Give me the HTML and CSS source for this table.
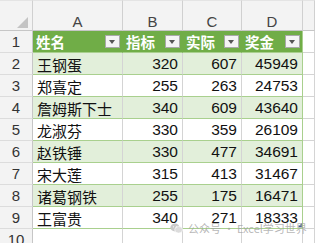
FILE: index.html
```html
<!DOCTYPE html>
<html lang="zh">
<head>
<meta charset="utf-8">
<link rel="stylesheet" href="styles.css">
</head>
<body>
<div class="sheet">
  <div class="grid">
    <div class="ch corner"><svg class="tri" width="11" height="11" viewBox="0 0 11 11"><polygon points="11,0 11,11 0,11" fill="#c4c4c4"/></svg></div>
    <div class="ch">A</div>
    <div class="ch">B</div>
    <div class="ch">C</div>
    <div class="ch">D</div>
    <div class="ch last"></div>

    <div class="rh">1</div>
    <div class="th">姓名<span class="fb"></span></div>
    <div class="th">指标<span class="fb"></span></div>
    <div class="th">实际<span class="fb"></span></div>
    <div class="th te">奖金<span class="fb"></span></div>
    <div class="gc"></div>

    <div class="rh">2</div>
    <div class="td band">王钢蛋</div>
    <div class="td band num">320</div>
    <div class="td band num">607</div>
    <div class="td band num te">45949</div>
    <div class="gc"></div>

    <div class="rh">3</div>
    <div class="td">郑喜定</div>
    <div class="td num">255</div>
    <div class="td num">263</div>
    <div class="td num te">24753</div>
    <div class="gc"></div>

    <div class="rh">4</div>
    <div class="td band">詹姆斯下士</div>
    <div class="td band num">340</div>
    <div class="td band num">609</div>
    <div class="td band num te">43640</div>
    <div class="gc"></div>

    <div class="rh">5</div>
    <div class="td">龙淑芬</div>
    <div class="td num">330</div>
    <div class="td num">359</div>
    <div class="td num te">26109</div>
    <div class="gc"></div>

    <div class="rh">6</div>
    <div class="td band">赵铁锤</div>
    <div class="td band num">330</div>
    <div class="td band num">477</div>
    <div class="td band num te">34691</div>
    <div class="gc"></div>

    <div class="rh">7</div>
    <div class="td">宋大莲</div>
    <div class="td num">315</div>
    <div class="td num">413</div>
    <div class="td num te">31467</div>
    <div class="gc"></div>

    <div class="rh">8</div>
    <div class="td band">诸葛钢铁</div>
    <div class="td band num">255</div>
    <div class="td band num">175</div>
    <div class="td band num te">16471</div>
    <div class="gc"></div>

    <div class="rh">9</div>
    <div class="td">王富贵</div>
    <div class="td num">340</div>
    <div class="td num">271</div>
    <div class="td num te">18333</div>
    <div class="gc"></div>

    <div class="rh">10</div>
    <div class="gc"></div>
    <div class="gc"></div>
    <div class="gc"></div>
    <div class="gc"></div>
    <div class="gc"></div>
  </div>
  <span class="handle"></span>
  <div class="wm">
    <svg class="wmi" width="13" height="11" viewBox="0 0 13 11"><ellipse cx="5" cy="4.5" rx="4.6" ry="3.9" fill="#c9c9c9"/><ellipse cx="8.6" cy="6.8" rx="3.9" ry="3.3" fill="#dcdcdc" stroke="#fff" stroke-width="0.6"/><circle cx="3.4" cy="3.8" r="0.6" fill="#fff"/><circle cx="6.4" cy="3.8" r="0.6" fill="#fff"/></svg>
    <span>公众号 · Excel学习世界</span>
  </div>
</div>
</body>
</html>
```

FILE: styles.css
```css
html, body {
  margin: 0;
  padding: 0;
  background: #ffffff;
}
body {
  width: 315px;
  height: 243px;
  overflow: hidden;
  font-family: "Liberation Sans", "Noto Sans CJK SC", sans-serif;
  font-size: 15px;
  color: #111;
}
.sheet {
  position: relative;
  width: 315px;
  height: 243px;
  overflow: hidden;
}
.grid {
  display: grid;
  grid-template-columns: 33px 90px 60px 59px 61px 1fr;
  grid-template-rows: 31px repeat(10, 22px);
}
.grid > div {
  box-sizing: border-box;
  border-right: 1px solid #d4d4d4;
  border-bottom: 1px solid #d4d4d4;
  white-space: nowrap;
  overflow: hidden;
}
.ch {
  background: #f3f3f3;
  color: #444;
  display: flex;
  justify-content: center;
  align-items: center;
  padding-top: 11px;
  font-size: 15px;
  border-top: 1px solid #e4e4e4;
}
.grid > .ch {
  border-right-color: #d0d0d0;
  border-bottom-color: #c6c6c6;
}
.corner {
  position: relative;
  padding-top: 0;
}
.tri {
  position: absolute;
  left: 17px;
  top: 16px;
}
.grid > .rh {
  background: #f3f3f3;
  color: #333;
  display: flex;
  justify-content: center;
  align-items: center;
  border-right-color: #c6c6c6;
  border-bottom-color: #dcdcdc;
  font-size: 15px;
}
.grid > .th {
  background: #70ad47;
  color: #fff;
  font-weight: bold;
  display: flex;
  align-items: center;
  padding-left: 3px;
  padding-right: 2px;
  font-family: "Noto Sans CJK SC", sans-serif;
  font-size: 14.5px;
  border-right-color: #70ad47;
  border-bottom-color: #a9d08e;
}
.fb {
  margin-left: auto;
  width: 15px;
  height: 13px;
  box-sizing: border-box;
  background: #f4f4f4;
  border: 1px solid #a9a9a9;
  position: relative;
}
.fb::after {
  content: "";
  position: absolute;
  left: 3px;
  top: 4px;
  border-left: 3.5px solid transparent;
  border-right: 3.5px solid transparent;
  border-top: 4px solid #555;
}
.grid > .td {
  display: flex;
  align-items: center;
  padding: 1px 4px 0 4px;
  border-bottom-color: #a9d08e;
  font-family: "Noto Sans CJK SC", sans-serif;
}
.grid > .band {
  background: #e2efda;
}
.grid > .num {
  justify-content: flex-end;
  font-family: "Liberation Sans", sans-serif;
  font-size: 15.5px;
  padding-right: 4px;
}
.grid > .te {
  border-right-color: #a9d08e;
}
.handle {
  position: absolute;
  left: 298px;
  top: 223px;
  width: 0;
  height: 0;
  border-left: 4px solid transparent;
  border-bottom: 4px solid #3f5f9a;
}
.wm {
  position: absolute;
  left: 170px;
  top: 222px;
  display: flex;
  align-items: center;
  gap: 5px;
  color: rgba(160, 160, 160, 0.75);
  font-family: "Noto Sans CJK SC", sans-serif;
  font-size: 11px;
  line-height: 12px;
}
.wmi {
  flex: none;
}
```
